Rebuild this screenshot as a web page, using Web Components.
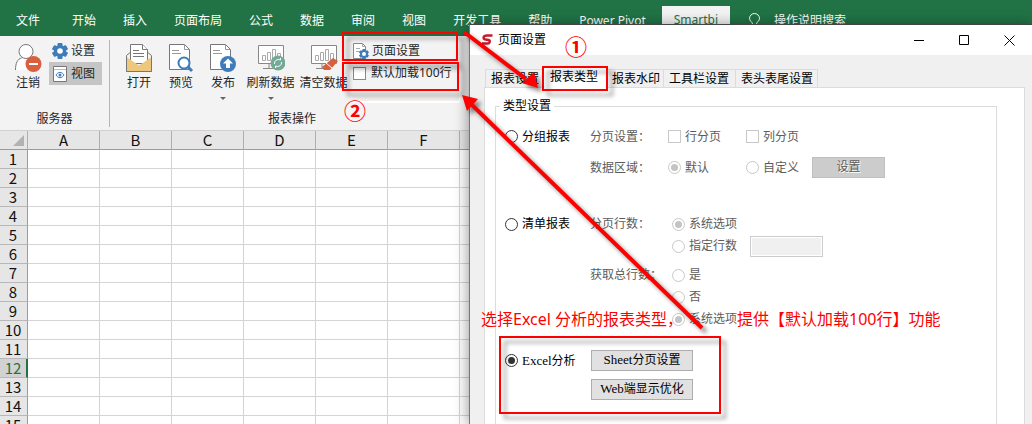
<!DOCTYPE html>
<html lang="zh-CN">
<head>
<meta charset="utf-8">
<title>Smartbi 页面设置</title>
<style>
html,body{margin:0;height:100%;overflow:hidden}
body{font:12px/16px "Noto Sans","Noto Sans CJK SC",sans-serif;color:#262626;background:#fff}
</style>
</head>
<body>
<smart-app></smart-app>
<script>
const define = (name, html) => {
  const t = document.createElement('template');
  t.innerHTML = html;
  customElements.define(name, class extends HTMLElement {
    constructor() {
      super();
      this.attachShadow({mode: 'open'}).append(t.content.cloneNode(true));
    }
  });
};

define('menu-bar', `
<style>
:host{display:flex;height:36px;background:#217346;white-space:nowrap}
button{font:inherit;color:#fff;background:none;border:0;margin:0;padding:5px 13px 0;cursor:pointer;flex:none}
.file{padding:5px 16px 0}
nav{display:flex;gap:1px;margin-left:3px}
.on{background:#f3f3f3;color:#217346;margin:6px 0 0 2px;padding:0 12px 2px}
.find{display:flex;align-items:center;gap:13px;padding-left:17px}
</style>
<button class="file">文件</button>
<nav>
<button>开始</button><button>插入</button><button>页面布局</button><button>公式</button><button>数据</button><button>审阅</button><button>视图</button><button>开发工具</button><button>帮助</button><button>Power Pivot</button><button class="on">Smartbi</button>
<button class="find"><svg width="13" height="16" viewBox="0 0 13 16" fill="none" stroke="#fff"><path d="M4.500 12.500V11C4.500 9 1.500 8 1.500 5.500a5 5 0 0 1 10 0C11.500 8 8.500 9 8.500 11v1.500zM4.500 14.500h4"/></svg>操作说明搜索</button>
</nav>`);

define('ribbon-group', `
<style>
:host{display:flex;flex-direction:column;box-sizing:border-box;border-right:1px solid #b5b5b5}
.items{display:flex;flex:1;align-items:flex-start}
.name{text-align:center;height:16px}
</style>
<div class="items"><slot></slot></div><div class="name"><slot name="name"></slot></div>`);

define('ribbon-tool', `
<style>
:host{display:block}
button{font:inherit;color:inherit;background:none;border:0;padding:0;margin:0;width:100%;display:flex;flex-direction:column;align-items:center;white-space:nowrap}
.arrow{display:none;margin-top:6px;border:3px solid transparent;border-top-color:#666;border-bottom:0}
:host([menu]) .arrow{display:block}
.ic{height:32px}
::slotted(svg){display:block}
</style>
<button><span class="ic"><slot name="icon"></slot></span><span><slot></slot></span><span class="arrow"></span></button>`);

define('ribbon-line', `
<style>
:host{display:block}
button{font:inherit;color:inherit;background:none;border:0;padding:0 3px;margin:0;height:23px;display:flex;align-items:center;gap:3px;white-space:nowrap;width:100%}
:host([pressed]) button{background:#c5c5c5}
::slotted(svg){display:block}
</style>
<button><slot name="icon"></slot><span><slot></slot></span></button>`);

/* Tick box or radio with its caption */
class OptionBox extends HTMLElement {
  connectedCallback() {
    const kind = this.getAttribute('kind') || 'radio';
    const root = this.attachShadow({mode: 'open'});
    root.innerHTML = `
<style>
:host{display:inline-flex;align-items:center}
label{display:flex;align-items:center;gap:4px;white-space:nowrap;color:#000}
input{appearance:none;box-sizing:border-box;width:13px;height:13px;margin:0;flex:none;background:#fff;border:1px solid #333;display:grid;place-items:center}
input[type=radio]{border-radius:50%}
input[type=radio]:checked::before{content:"";width:7px;height:7px;border-radius:50%;background:#333}
:host([disabled]) label{color:#5c5c5c}
:host([disabled]) input{border-color:#c8c8c8}
:host([disabled]) input:checked::before{background:#c4c4c4}
:host([ribbon]) label{color:#262626;gap:5px}
:host([ribbon]) input{border-color:#888}
</style>
<label><input type="${kind}" ${this.hasAttribute('checked') ? 'checked' : ''} ${this.hasAttribute('disabled') ? 'disabled' : ''}><span><slot></slot></span></label>`;
  }
}
customElements.define('option-box', OptionBox);

define('ribbon-bar', `
<style>
:host{display:flex;box-sizing:border-box;height:94px;background:#f3f3f3;padding:4px 0 3px}
.server{width:110px}
.report{width:364px;border:0}
ribbon-group{padding-top:3px}
.out{width:42px;margin-left:7px}
.lines{width:53px;margin-top:-4px}
.t1{width:42px;margin-left:8px}.t2{width:42px}.t3{width:53px}
.more{display:flex;flex-direction:column;margin-top:-4px}
option-box{height:22px;padding-left:3px}
.well{width:106px;height:10px;margin:7px 0 0 3px;background:#f1f0ef;border:solid #fff;border-width:0 1px 2px 0}
</style>
<ribbon-group class="server">
<ribbon-tool class="out"><svg slot="icon" width="28" height="30" viewBox="0 0 28 30" fill="#fff" stroke="#777"><path stroke="none" d="M2 27c0-8 3-11 8-12l8 1v11z"/><path d="M1.500 27c0-7 2-11 6-12" fill="none"/><circle cx="12" cy="8.500" r="7"/><circle cx="19.500" cy="21" r="8" fill="#d9603f" stroke="none"/><path d="M15 21h9" stroke="#fff" stroke-width="2"/></svg>注销</ribbon-tool>
<div class="lines">
<ribbon-line><svg slot="icon" width="16" height="16" viewBox="0 0 16 16"><g fill="#3f7cba"><rect x="5.500" width="5" height="16" rx="1"/><rect x="5.500" width="5" height="16" rx="1" transform="rotate(60 8 8)"/><rect x="5.500" width="5" height="16" rx="1" transform="rotate(120 8 8)"/><circle cx="8" cy="8" r="6"/></g><circle cx="8" cy="8" r="2.800" fill="#fff"/></svg>设置</ribbon-line>
<ribbon-line pressed><svg slot="icon" width="16" height="16" viewBox="0 0 16 16"><path d="M1.500.5h13v15h-13z" fill="#fff" stroke="#777"/><path d="M2 3.500h12" stroke="#bbb"/><path d="M4 9c2-3.500 6-3.500 8 0-2 3.500-6 3.500-8 0z" fill="#fff" stroke="#3f7cba"/><circle cx="8" cy="9" r="1.500" fill="#3f7cba"/></svg>视图</ribbon-line>
</div>
<span slot="name">服务器</span>
</ribbon-group>
<ribbon-group class="report">
<ribbon-tool class="t1"><svg slot="icon" width="28" height="30" viewBox="0 0 28 30" fill="#fff" stroke="#777"><path d="M1.500 12.500 7 8h14l5.500 4.500v16h-25z" fill="#f3f3f3"/><path d="M5.500 1.500h12l5 5v14h-17z"/><path d="M17.500 1.500v5h5M8 7.500h6M8 10.500h11M8 13.500h11"/><path d="M1.500 14 14 22.500 26.500 14v14.500h-25z" fill="#edc77d" stroke="none"/><path d="M1.500 13v15.500h25V13" fill="none"/></svg>打开</ribbon-tool>
<ribbon-tool class="t2"><svg slot="icon" width="28" height="30" viewBox="0 0 28 30" fill="#fff" stroke="#777"><path d="M2.500 1.500h15l5 5v20h-20z"/><path d="M17.500 1.500v5h5M5 7.500h7M5 10.500h9" fill="none" stroke="#999"/><circle cx="17" cy="20" r="5.500" stroke="#3f7cba" stroke-width="2"/><path d="m21 24 4 4" stroke="#3f7cba" stroke-width="3"/></svg>预览</ribbon-tool>
<ribbon-tool class="t2" menu><svg slot="icon" width="28" height="30" viewBox="0 0 28 30" fill="#fff" stroke="#777"><path d="M1.500 1.500h15l5 5v20h-20z"/><path d="M16.500 1.500v5h5M4 7.500h7M4 10.500h9" fill="none" stroke="#999"/><circle cx="19" cy="21" r="8" fill="#3f7cba" stroke="none"/><path d="m19 15.500-5 5h3V25h4v-4.500h3z" stroke="none"/></svg>发布</ribbon-tool>
<ribbon-tool class="t3" menu><svg slot="icon" width="28" height="30" viewBox="0 0 28 30" fill="#fff" stroke="#888"><path d="M1.500 2.500h25v18h-25z"/><path d="M12 21v4M6 25.500h10" /><path d="M5.500 12.500h3v5h-3zM10.500 9.500h3v8h-3zM15.500 6.500h3v11h-3zM20.500 10.500h3v7h-3z" stroke="#aaa"/><circle cx="21" cy="20" r="7.500" fill="#72aa96" stroke="none"/><path d="M17.500 21a4 4 0 0 1 6-4v-2M24.500 19a4 4 0 0 1-6 4v2" fill="none" stroke="#fff"/></svg>刷新数据</ribbon-tool>
<ribbon-tool class="t3"><svg slot="icon" width="28" height="30" viewBox="0 0 28 30" fill="#fff" stroke="#888"><path d="M1.500 2.500h25v18h-25z"/><path d="M12 21v4M6 25.500h10"/><path d="M5.500 12.500h3v5h-3zM10.500 9.500h3v8h-3zM15.500 6.500h3v11h-3zM20.500 10.500h3v7h-3z" stroke="#aaa"/><path d="m23 15 5 3-8 9h-6l-2-3z" fill="#d9603f" stroke="none"/><path d="m16 20 6 5" stroke="#fff"/></svg>清空数据</ribbon-tool>
<div class="more">
<ribbon-line><svg slot="icon" width="16" height="16" viewBox="0 0 16 16"><path d="M.5.500h9l3 3v12H.5z" fill="#fff" stroke="#888"/><path d="M9.500.500v3h3M3 5.500h4M3 8.500h4" fill="none" stroke="#aaa"/><g fill="#3f7cba"><rect x="9.500" y="6" width="3" height="10"/><rect x="9.500" y="6" width="3" height="10" transform="rotate(60 11 11)"/><rect x="9.500" y="6" width="3" height="10" transform="rotate(120 11 11)"/><circle cx="11" cy="11" r="4"/></g><circle cx="11" cy="11" r="2" fill="#fff"/></svg>页面设置</ribbon-line>
<option-box kind="checkbox" ribbon>默认加载100行</option-box>
<div class="well"></div>
</div>
<span slot="name">报表操作</span>
</ribbon-group>`);

class SheetGrid extends HTMLElement {
  constructor() {
    super();
    const cols = [...'ABCDEF'];
    const rows = Array.from({length: 15}, (_, i) => i + 1);
    this.attachShadow({mode: 'open'}).innerHTML = `
<style>
:host{display:block;flex:1;min-height:0;overflow:hidden;background:#fff;border-top:1px solid #d0d0d0}
table{border-collapse:separate;border-spacing:0;table-layout:fixed;width:100%;font:15px/18px "Noto Sans CJK SC",sans-serif;color:#111}
th,td{box-sizing:border-box;height:19px;padding:0;border:solid #d4d4d4;border-width:0 1px 1px 0}
th{font-weight:400;background:#e6e6e6;line-height:18px}
thead th{border-color:#9b9b9b;border-right-color:#b0b0b0;width:72px}
thead td{background:#e6e6e6;border-color:#9b9b9b}
tbody th{border-right-color:#9b9b9b;border-bottom-color:#b8b8b8;padding-right:1px}
thead .corner{width:28px}
.corner svg{display:block;margin:0 0 0 13px}
.cur th{background:#d2d2d2;color:#217346;border-right:2px solid #217346;padding:0}
</style>
<table><thead><tr><th class="corner"><svg width="11" height="11"><path d="M11 0v11H0z" fill="#b2b2b2"/></svg></th>${cols.map(c => `<th scope="col">${c}</th>`).join('')}<td></td></tr></thead>
<tbody>${rows.map(r => `<tr class="${r === 12 ? 'cur' : ''}"><th scope="row">${r}</th>${cols.map(() => '<td></td>').join('')}<td></td></tr>`).join('')}</tbody></table>`;
  }
}
customElements.define('sheet-grid', SheetGrid);

define('report-form', `
<style>
:host{display:block}
fieldset{margin:0;padding:7px 0 24px 9px;border:1px solid #dcdcdc;min-width:0;min-height:330px}
legend{padding:0 3px;margin-left:-5px;color:#000;height:16px}
section{display:grid;grid-template-columns:85px 78px 78px 1fr;grid-auto-rows:31px;align-items:center;white-space:nowrap}
.list{grid-auto-rows:22px;grid-template-columns:85px 82px 78px 1fr;margin-top:30px}
.list .gap{margin-top:7px}
.list{grid-template-rows:22px 22px 29px 22px 22px}
.excel{grid-template-columns:86px 1fr;grid-auto-rows:29px;margin-top:16px}
.cap{color:#5c5c5c}
.c3{grid-column:3}
.c2{grid-column:2}
button{font:inherit;box-sizing:border-box;height:21px;padding:0 0 2px;border:1px solid #adadad;background:#e1e1e1;color:#000;width:102px}
button:disabled{width:73px;background:#ccc;border-color:#bfbfbf;color:#5c5c5c;text-shadow:1px 1px #fff}
.own{display:flex;align-items:center;gap:13px}
input{box-sizing:border-box;width:73px;height:21px;border:1px solid #ccc;padding:1px;background:#f0f0f0;box-shadow:inset 0 0 0 1px #fff}
.lat{font:13px/16px "Liberation Serif",serif}
</style>
<fieldset><legend>类型设置</legend>
<section>
<option-box>分组报表</option-box><span class="cap">分页设置：</span><option-box kind="checkbox" disabled>行分页</option-box><option-box kind="checkbox" disabled>列分页</option-box>
<span class="cap c2">数据区域：</span><option-box checked disabled>默认</option-box><div class="own"><option-box disabled>自定义</option-box><button disabled>设置</button></div>
</section>
<section class="list">
<option-box>清单报表</option-box><span class="cap">分页行数：</span><option-box checked disabled>系统选项</option-box>
<option-box class="c3" disabled>指定行数</option-box><input type="text" disabled aria-label="指定行数">
<span class="cap c2 gap">获取总行数：</span><option-box class="gap" disabled>是</option-box>
<option-box class="c3" disabled>否</option-box>
<option-box class="c3" checked disabled>系统选项</option-box>
</section>
<section class="excel">
<option-box checked><span class="lat">Excel</span>分析</option-box><button><span class="lat">Sheet</span>分页设置</button>
<button class="c2"><span class="lat">Web</span>端显示优化</button>
</section>
</fieldset>`);

define('settings-dialog', `
<style>
:host{display:flex;flex-direction:column;box-sizing:border-box;background:#f0f0f0;border:solid #444;border-width:1px 0 0 1px;border-left-color:#777;box-shadow:0 2px 14px rgba(0,0,0,.45);overflow:hidden;isolation:isolate}
header{display:flex;align-items:center;height:30px;background:#fff;color:#000;padding-left:11px;flex:none}
h1{font:inherit;margin:0 auto 0 5px}
header button{width:45px;height:30px;border:0;background:none;padding:0;display:grid;place-items:center}
.tabs{display:flex;align-items:flex-end;margin:11px 0 0 15px;height:21px;flex:none}
.tabs button{font:inherit;color:#000;background:#f0f0f0;border:1px solid #dcdcdc;border-bottom:0;box-sizing:border-box;height:18px;padding:1px 0 0 5px;text-align:left;white-space:nowrap;width:58px;margin-right:-1px}
.tabs .on{height:22px;width:65px;background:#fff;margin-bottom:-1px;padding:0 0 1px 7px;z-index:1}
.tabs .w5{width:73px}.tabs .w6{width:83px}
.page{flex:1;background:#fff;border:1px solid #dcdcdc;margin:0 7px 0 14px;padding:10px 27px 0 10px}
</style>
<header><svg width="12" height="12" viewBox="0 0 12 12"><path d="M11.500 1.500H6C2 1.500 1.500 5 4.500 5.500l3 .5C9.500 6.500 9 9.500 6.500 9.500H1" fill="none" stroke="#c41c2c" stroke-width="2.500"/></svg><h1>页面设置</h1>
<button aria-label="最小化"><svg width="11" height="11" stroke="#000"><path d="M0 5.500h10"/></svg></button>
<button aria-label="最大化"><svg width="11" height="11" stroke="#000" fill="none"><path d="M.5.500h9v9h-9z"/></svg></button>
<button aria-label="关闭"><svg width="11" height="11" stroke="#000"><path d="m.5.500 10 10m0-10-10 10"/></svg></button></header>
<div class="tabs"><button>报表设置</button><button class="on">报表类型</button><button>报表水印</button><button class="w5">工具栏设置</button><button class="w6">表头表尾设置</button></div>
<div class="page"><report-form></report-form></div>`);

/* Red markup laid over the windows */
define('markup-layer', `
<style>
:host{display:block;position:absolute;inset:0;pointer-events:none;color:#f00}
.box{position:absolute;box-sizing:border-box;border:2px solid #f00;filter:drop-shadow(5px 5px 2px rgba(0,0,0,.4))}
.num{position:absolute;font:bold 22px/24px "Noto Sans CJK SC",sans-serif}
.note{position:absolute;font:16px/24px "Noto Sans","Noto Sans CJK SC",sans-serif;white-space:nowrap}
svg{position:absolute;left:0;top:0;overflow:visible;filter:drop-shadow(4px 4px 2px rgba(0,0,0,.45))}
</style>
<div class="box" style="left:342px;top:32px;width:116px;height:29px"></div>
<div class="box" style="left:342px;top:62px;width:117px;height:29px"></div>
<div class="box" style="left:542px;top:66px;width:66px;height:25px"></div>
<div class="box" style="left:499px;top:336px;width:222px;height:78px"></div>
<div class="num" style="left:565px;top:33px">①</div>
<div class="num" style="left:344px;top:97px">②</div>
<div class="note" style="left:481px;top:307px">选择Excel 分析的报表类型，</div>
<div class="note" style="left:737px;top:307px">提供【默认加载100行】功能</div>
<svg width="1" height="1" stroke="#f00" stroke-width="4"><path d="m464 32 62 47M702 328 472 105" fill="none"/><path d="m538 88-4-16-12 11zM462 95l16 4-11 12z" fill="#f00" stroke="none"/></svg>`);

define('smart-app', `
<style>
:host{display:flex;flex-direction:column;position:relative;height:100vh;overflow:hidden}
menu-bar,ribbon-bar{flex:none}
settings-dialog{position:absolute;left:469px;top:24px;right:0;bottom:0}
</style>
<menu-bar></menu-bar><ribbon-bar></ribbon-bar><sheet-grid></sheet-grid>
<settings-dialog role="dialog" aria-label="页面设置"></settings-dialog>
<markup-layer></markup-layer>`);
</script>
</body>
</html>
